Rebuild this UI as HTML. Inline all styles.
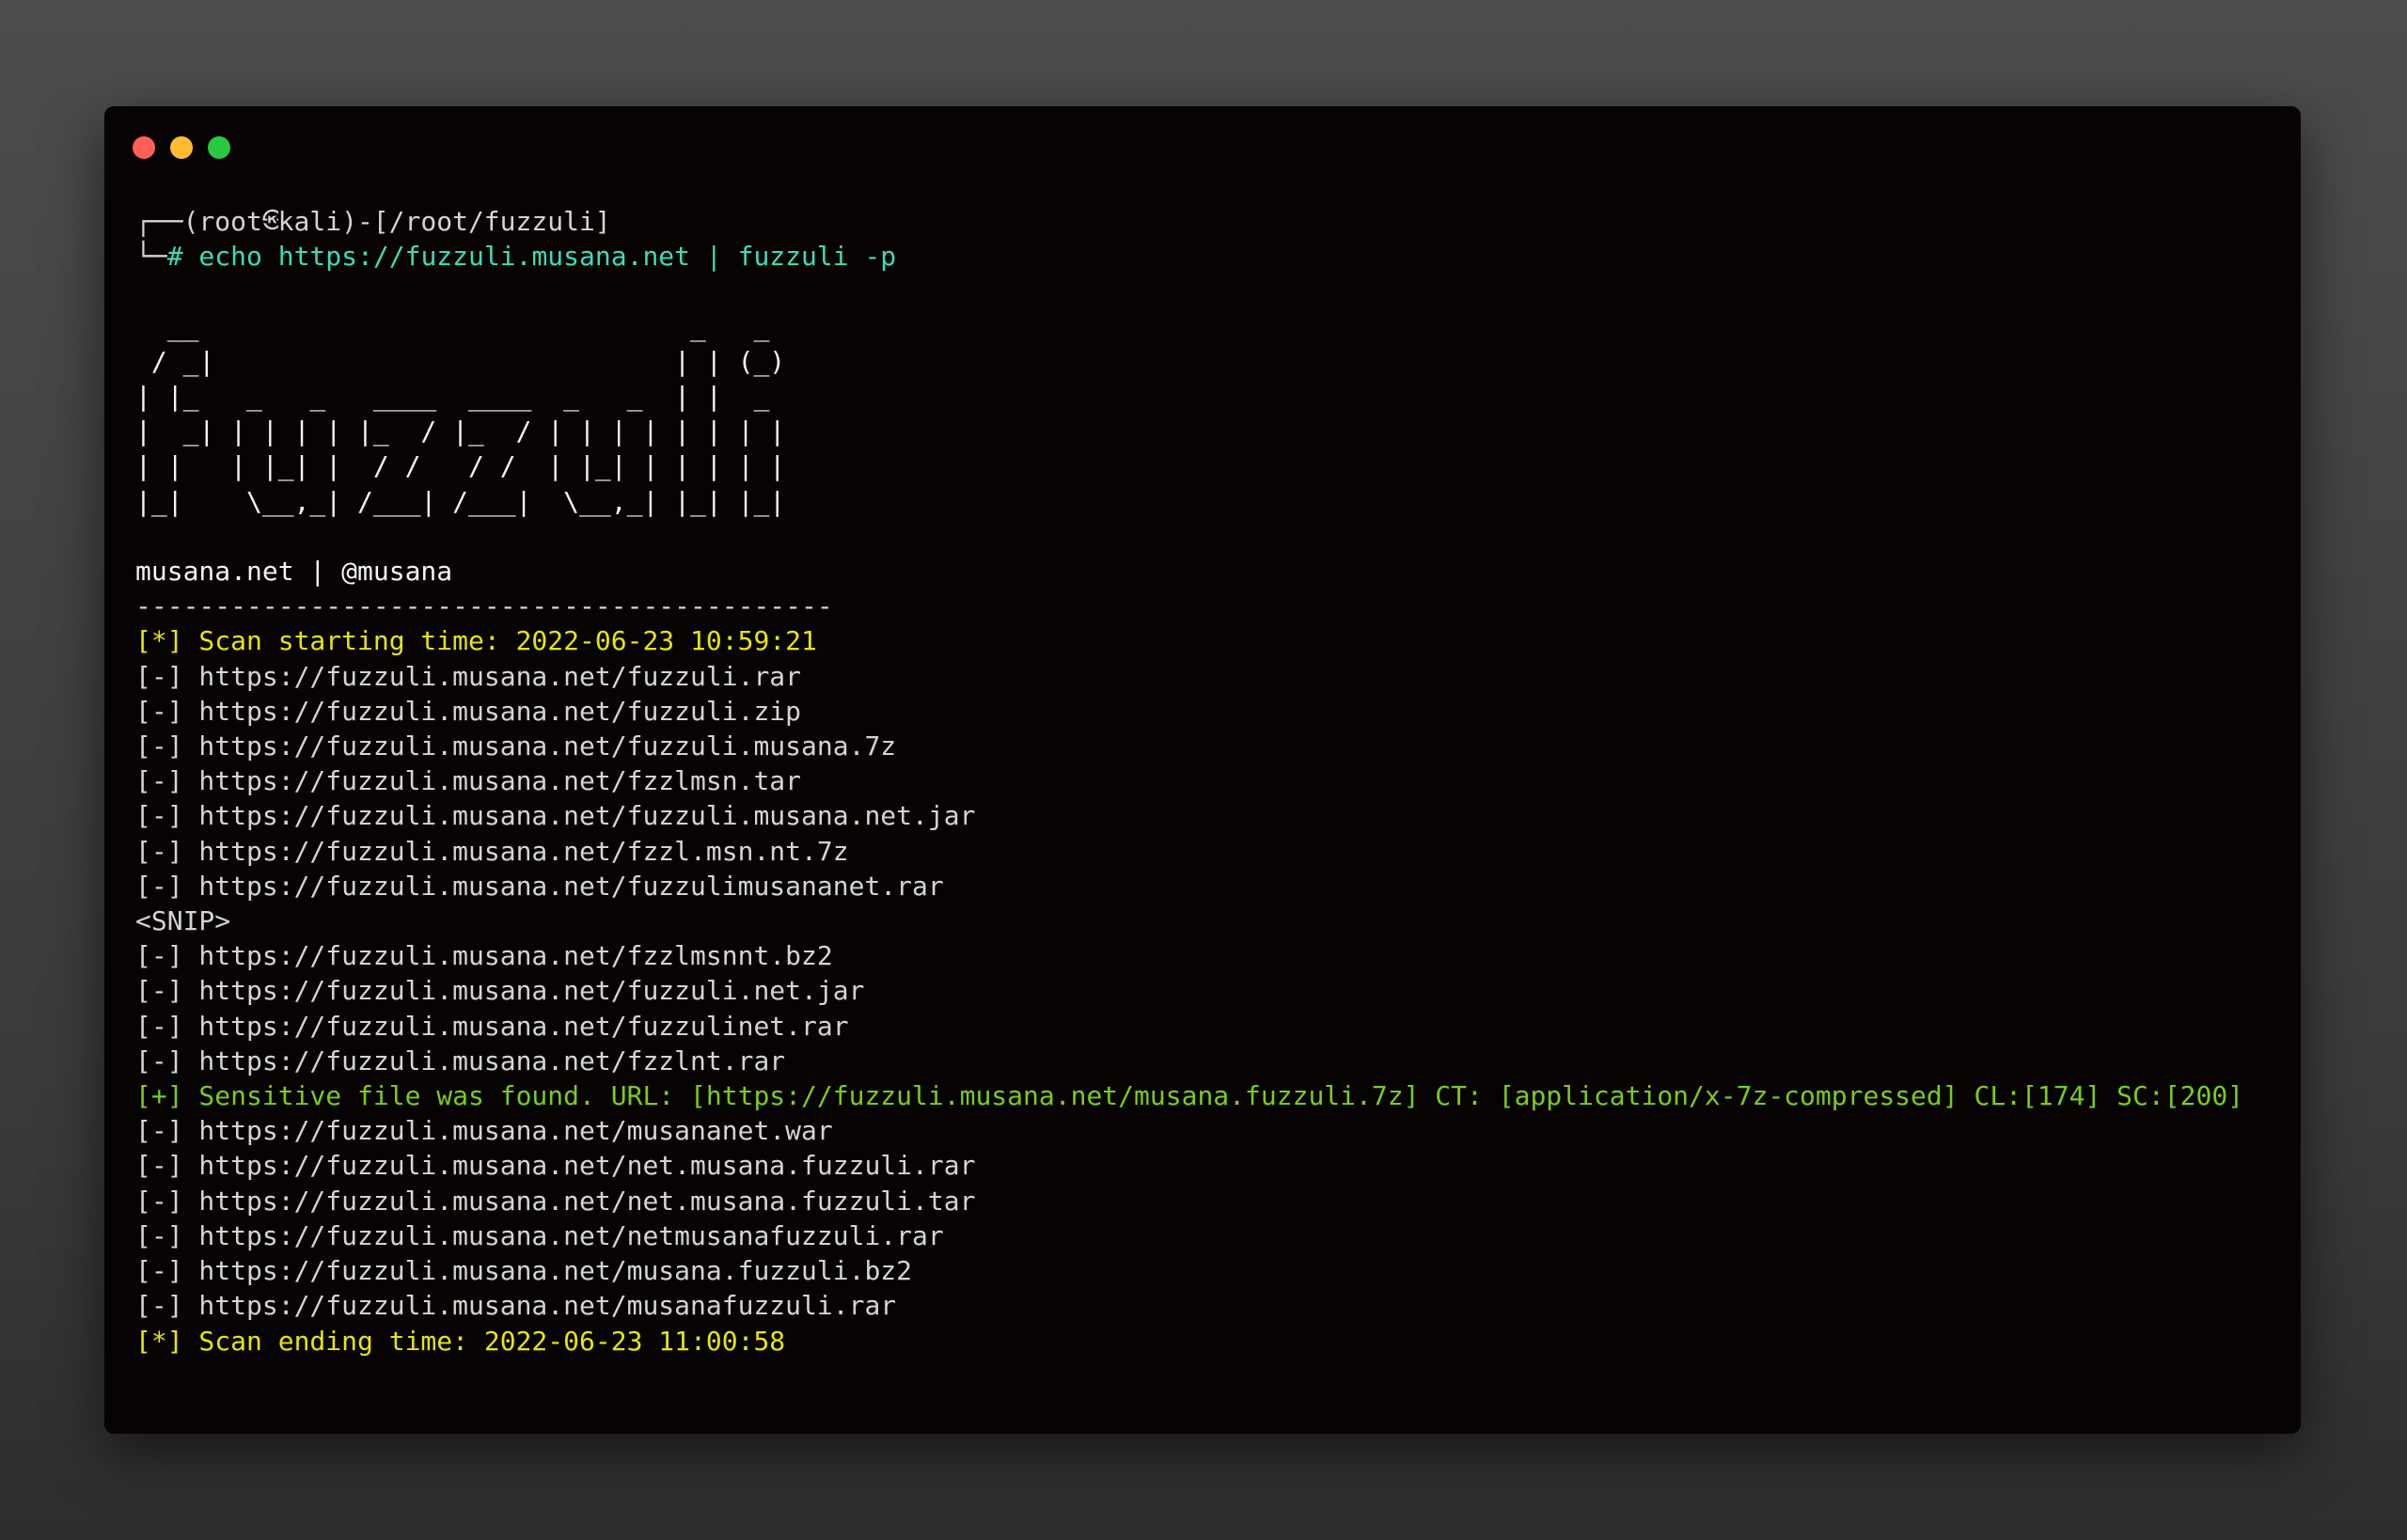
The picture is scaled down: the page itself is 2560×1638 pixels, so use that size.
<!DOCTYPE html>
<html><head><meta charset="utf-8"><style>
html,body{margin:0;padding:0}
body{width:2560px;height:1638px;background:linear-gradient(#4c4c4c,#3a3a3a 70%,#2e2e2e);position:relative;overflow:hidden}
.win{position:absolute;left:111px;top:113px;width:2336px;height:1412px;background:#070302;border-radius:10px;box-shadow:0 20px 60px rgba(0,0,0,.55)}
.dot{position:absolute;top:145px;width:24px;height:24px;border-radius:50%}
pre{position:absolute;left:144px;top:217px;margin:0;font-family:"DejaVu Sans Mono","Liberation Mono",monospace;font-size:28px;line-height:37.2px;color:#d4d4d4;white-space:pre}
.c{color:#3ddbb9}.y{color:#e7e40f}.g{color:#7bcb1c}.w{color:#f4f4f4}
.k{display:inline-block;width:16.8px;overflow:hidden;vertical-align:top;font-size:22px;text-align:center}
</style></head><body>
<div class="win"></div>
<div class="dot" style="left:141px;background:#fe5f57"></div>
<div class="dot" style="left:181px;background:#febc2e"></div>
<div class="dot" style="left:221px;background:#28c840"></div>
<pre>┌──(root<span class="k">㉿</span>kali)-[/root/fuzzuli]
└─<span class="c"># echo https://fuzzuli.musana.net | fuzzuli -p</span>

<span class="w">  __                               _   _
 / _|                             | | (_)
| |_   _   _   ____  ____  _   _  | |  _
|  _| | | | | |_  / |_  / | | | | | | | |
| |   | |_| |  / /   / /  | |_| | | | | |
|_|    \__,_| /___| /___|  \__,_| |_| |_|

musana.net | @musana</span>
--------------------------------------------
<span class="y">[*] Scan starting time: 2022-06-23 10:59:21</span>
[-] https://fuzzuli.musana.net/fuzzuli.rar
[-] https://fuzzuli.musana.net/fuzzuli.zip
[-] https://fuzzuli.musana.net/fuzzuli.musana.7z
[-] https://fuzzuli.musana.net/fzzlmsn.tar
[-] https://fuzzuli.musana.net/fuzzuli.musana.net.jar
[-] https://fuzzuli.musana.net/fzzl.msn.nt.7z
[-] https://fuzzuli.musana.net/fuzzulimusananet.rar
&lt;SNIP&gt;
[-] https://fuzzuli.musana.net/fzzlmsnnt.bz2
[-] https://fuzzuli.musana.net/fuzzuli.net.jar
[-] https://fuzzuli.musana.net/fuzzulinet.rar
[-] https://fuzzuli.musana.net/fzzlnt.rar
<span class="g">[+] Sensitive file was found. URL: [https://fuzzuli.musana.net/musana.fuzzuli.7z] CT: [application/x-7z-compressed] CL:[174] SC:[200]</span>
[-] https://fuzzuli.musana.net/musananet.war
[-] https://fuzzuli.musana.net/net.musana.fuzzuli.rar
[-] https://fuzzuli.musana.net/net.musana.fuzzuli.tar
[-] https://fuzzuli.musana.net/netmusanafuzzuli.rar
[-] https://fuzzuli.musana.net/musana.fuzzuli.bz2
[-] https://fuzzuli.musana.net/musanafuzzuli.rar
<span class="y">[*] Scan ending time: 2022-06-23 11:00:58</span></pre>
</body></html>
